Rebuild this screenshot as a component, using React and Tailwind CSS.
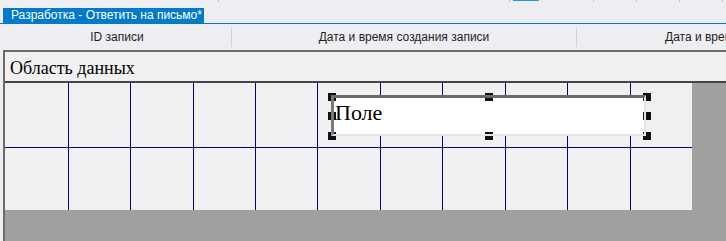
const cells = [
  "w-[64px] border-r",
  "w-[62px] border-r",
  "w-[63px] border-r",
  "w-[62px] border-r",
  "w-[62px] border-r",
  "w-[63px] border-r",
  "w-[62px] border-r",
  "w-[63px] border-r",
  "w-[62px] border-r",
  "w-[63px] border-r",
  "flex-1",
];

function GridRow({ className }) {
  return (
    <div className={`flex ${className}`}>
      {cells.map((c, i) => (
        <div key={i} className={`h-full border-[#00008b] ${c}`} />
      ))}
    </div>
  );
}

function Handle({ className }) {
  return <div className={`absolute h-[8px] w-[8px] bg-[#111] ${className}`} />;
}

// field on the report canvas (canvas origin x 5, y 83)
function FieldBox() {
  return (
    <>
      <div className="absolute left-[326px] top-[12px] h-[41px] w-[315px] bg-white" />
      <Handle className="left-[323px] top-[10px]" />
      <Handle className="left-[480px] top-[10px]" />
      <Handle className="left-[638px] top-[10px]" />
      <Handle className="left-[323px] top-[29px]" />
      <Handle className="left-[638px] top-[29px]" />
      <Handle className="left-[323px] top-[49px]" />
      <Handle className="left-[480px] top-[49px]" />
      <Handle className="left-[638px] top-[49px]" />
      <div className="absolute left-[326px] top-[12px] h-[41px] w-[315px] border-t-[3px] border-l-[3px] border-r-2 border-b-2 border-t-[#6a6a6a] border-l-[#7a7a7a] border-r-[#e4e4e4] border-b-[#e4e4e4]">
        <div className="pl-[1px] pt-[2px] font-['Liberation_Serif',serif] text-[22px] leading-[25px] text-black">
          Поле
        </div>
      </div>
    </>
  );
}

function Tick() {
  return <div className="h-[2px] w-[1px] shrink-0 bg-[#c4c4c8]" />;
}

export default function App() {
  return (
    <div className="flex h-[241px] w-[726px] flex-col overflow-hidden bg-[#eeeef2] font-['Liberation_Sans',Arial,sans-serif]">
      <div className="flex h-[8px] shrink-0 items-start pl-[218px]">
        <Tick />
        <div className="w-[290px] shrink-0" />
        <Tick />
        <div className="ml-[3px] h-[1px] w-[26px] shrink-0 bg-[#1e9be6]" />
        <div className="w-[54px] shrink-0" />
        <Tick />
        <div className="w-[42px] shrink-0" />
        <Tick />
        <div className="w-[42px] shrink-0" />
        <Tick />
        <div className="w-[42px] shrink-0" />
        <Tick />
      </div>

      <div className="flex h-[16px] shrink-0 border-b border-[#007acc] pl-[3px]">
        <div className="flex h-[15px] w-[201px] items-center bg-[#007acc] pl-[8px] text-[12px] leading-[15px] whitespace-nowrap text-white">
          Разработка - Ответить на письмо*
        </div>
      </div>

      <div className="flex h-[26px] shrink-0 items-center pl-[3px] text-[12px] whitespace-nowrap text-[#1e1e1e]">
        <div className="w-[228px] shrink-0 text-center">ID записи</div>
        <div className="h-[20px] w-[1px] shrink-0 bg-[#d0d0d4]" />
        <div className="w-[344px] shrink-0 text-center">Дата и время создания записи</div>
        <div className="h-[20px] w-[1px] shrink-0 bg-[#d0d0d4]" />
        <div className="w-[344px] shrink-0 pl-[88px]">Дата и время изменения записи</div>
      </div>

      <div className="ml-[3px] flex-1 border-l-2 border-t-2 border-[#6b6b6b] bg-[#a0a0a0]">
        <div className="h-[31px] border-b-2 border-[#444] bg-[#f0f0f0] pl-[5px] pt-[6px] font-['Liberation_Serif',serif] text-[18px] leading-[20px] text-black">
          Область данных
        </div>
        <div className="flex h-[127px]">
          <div className="relative w-[687px] shrink-0 bg-[#f0f0f0]">
            <GridRow className="h-[65px] border-b border-[#00008b]" />
            <GridRow className="h-[62px]" />
            <FieldBox />
          </div>
        </div>
      </div>
    </div>
  );
}
